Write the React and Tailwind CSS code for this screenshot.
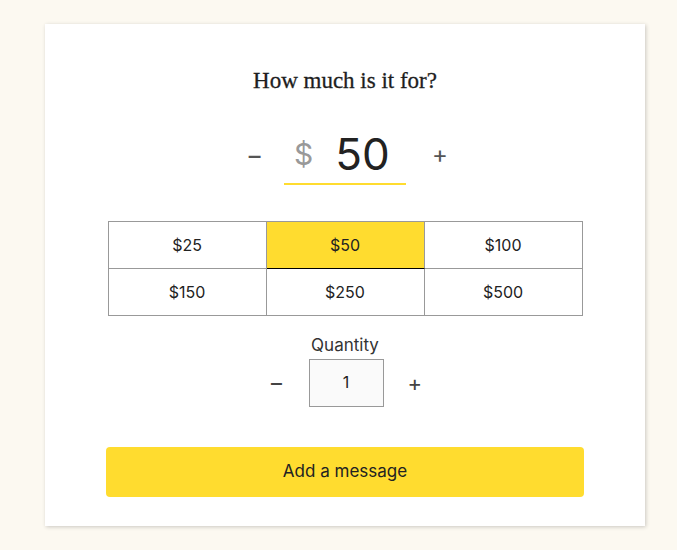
import { useState } from "react"

const amounts = [25, 50, 100, 150, 250, 500]

export default function App() {
  const [amount, setAmount] = useState(50)
  const [qty, setQty] = useState(1)

  return (
    <div className="min-h-[550px] bg-[#fcf9f1] pt-[24px] font-['Inter',sans-serif] text-[#222]">
      <div className="ml-[45px] flex h-[502px] w-[600px] flex-col items-center bg-white shadow-[1px_1px_4px_rgba(0,0,0,0.2)]">
        <h2 className="mt-[43px] font-['Liberation_Serif',serif] text-[23px] leading-[28px] text-[#1e1e1e] [-webkit-text-stroke:0.3px_#1e1e1e]">
          How much is it for?
        </h2>

        <div className="mt-[30px] flex items-center gap-[26px]">
          <button type="button" className="w-[12px] text-[26px] leading-none text-[#555]" onClick={() => setAmount(Math.max(0, amount - 1))}>
            −
          </button>
          <div className="flex h-[60px] w-[122px] items-center border-b-2 border-[#ffdc2f] pl-[10px]">
            <span className="text-[30px] leading-none text-[#999]">$</span>
            <span className="ml-[22px] text-[44px] leading-none text-[#222]">{amount}</span>
          </div>
          <button type="button" className="w-[12px] text-[24px] leading-none text-[#555]" onClick={() => setAmount(amount + 1)}>
            +
          </button>
        </div>

        <div className="mt-[36px] grid w-[475px] grid-cols-3 border-l border-t border-[#999]">
          {amounts.map((a) => (
            <button
              key={a}
              type="button"
              onClick={() => setAmount(a)}
              className={
                a === amount
                  ? "h-[47px] border-b border-r border-[#999] border-b-black bg-[#ffdc2f] text-[16px] text-[#222]"
                  : "h-[47px] border-b border-r border-[#999] bg-white text-[16px] text-[#222]"
              }
            >
              ${a}
            </button>
          ))}
        </div>

        <p className="mt-[17px] text-[17px] leading-[24px] text-[#333]">Quantity</p>
        <div className="mt-[2px] flex items-center">
          <button type="button" className="mr-[26px] w-[14px] text-[24px] leading-none text-[#444]" onClick={() => setQty(Math.max(1, qty - 1))}>
            −
          </button>
          <div className="flex h-[48px] w-[75px] items-start justify-center border border-[#999] bg-[#fafafa] pt-[12px] text-[16px] leading-[20px]">
            {qty}
          </div>
          <button type="button" className="ml-[24px] w-[14px] text-[22px] leading-none text-[#444]" onClick={() => setQty(qty + 1)}>
            +
          </button>
        </div>

        <button type="button" className="mt-[40px] h-[50px] w-[478px] rounded-[4px] bg-[#ffdc2f] text-[17px] text-[#222]">
          Add a message
        </button>
      </div>
    </div>
  )
}
